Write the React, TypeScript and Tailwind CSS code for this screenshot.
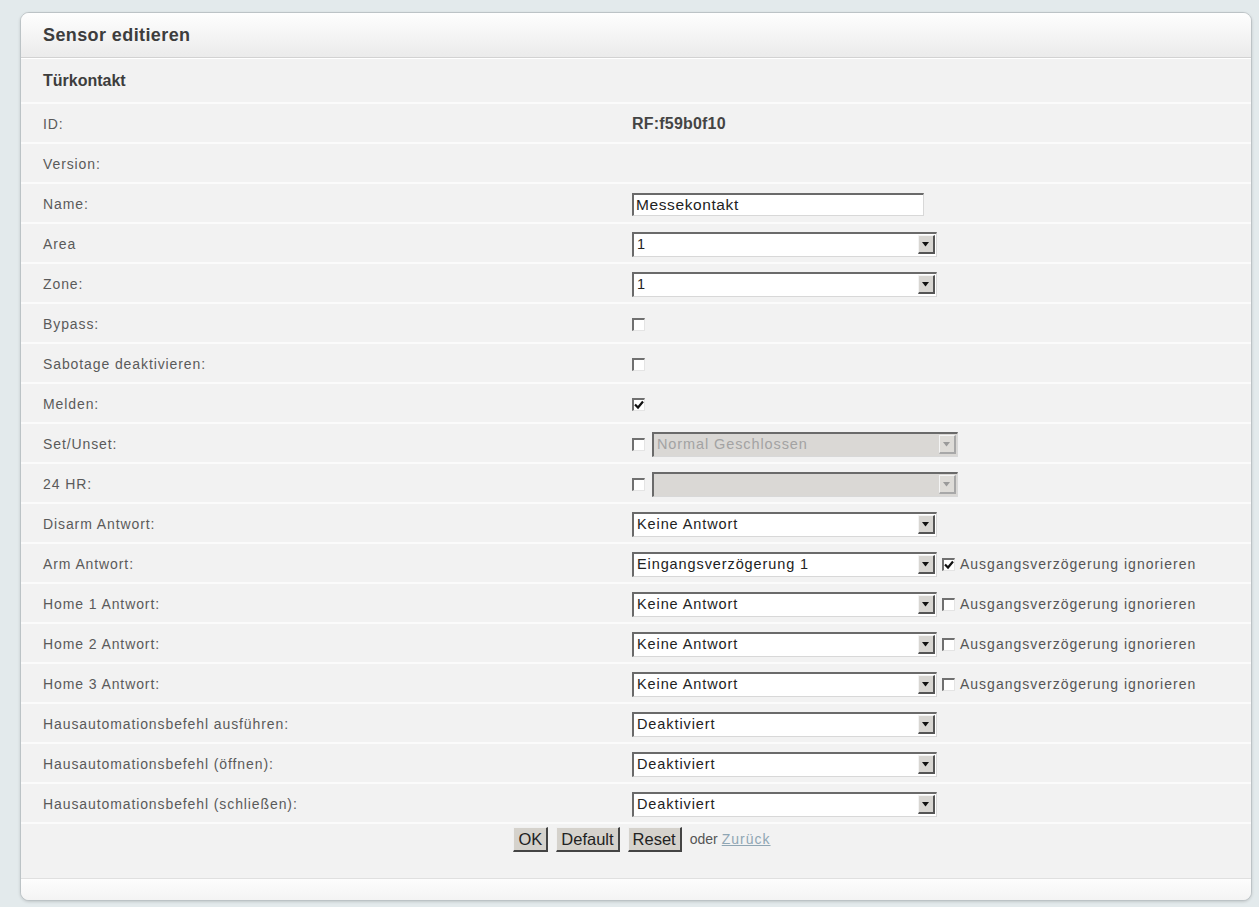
import React from 'react';

const font = { fontFamily: '"Liberation Sans", Arial, sans-serif' };

type Field =
    | { kind: 'text'; value?: string; bold?: boolean }
    | { kind: 'input'; value: string }
    | { kind: 'select'; value: string; ignore?: boolean | null }
    | { kind: 'check'; checked: boolean }
    | { kind: 'checkSelect'; value: string };

interface Row {
    label: string;
    field: Field;
}

const rows: Row[] = [
    { label: 'ID:', field: { kind: 'text', value: 'RF:f59b0f10', bold: true } },
    { label: 'Version:', field: { kind: 'text' } },
    { label: 'Name:', field: { kind: 'input', value: 'Messekontakt' } },
    { label: 'Area', field: { kind: 'select', value: '1' } },
    { label: 'Zone:', field: { kind: 'select', value: '1' } },
    { label: 'Bypass:', field: { kind: 'check', checked: false } },
    { label: 'Sabotage deaktivieren:', field: { kind: 'check', checked: false } },
    { label: 'Melden:', field: { kind: 'check', checked: true } },
    { label: 'Set/Unset:', field: { kind: 'checkSelect', value: 'Normal Geschlossen' } },
    { label: '24 HR:', field: { kind: 'checkSelect', value: '' } },
    { label: 'Disarm Antwort:', field: { kind: 'select', value: 'Keine Antwort' } },
    { label: 'Arm Antwort:', field: { kind: 'select', value: 'Eingangsverzögerung 1', ignore: true } },
    { label: 'Home 1 Antwort:', field: { kind: 'select', value: 'Keine Antwort', ignore: false } },
    { label: 'Home 2 Antwort:', field: { kind: 'select', value: 'Keine Antwort', ignore: false } },
    { label: 'Home 3 Antwort:', field: { kind: 'select', value: 'Keine Antwort', ignore: false } },
    { label: 'Hausautomationsbefehl ausführen:', field: { kind: 'select', value: 'Deaktiviert' } },
    { label: 'Hausautomationsbefehl (öffnen):', field: { kind: 'select', value: 'Deaktiviert' } },
    { label: 'Hausautomationsbefehl (schließen):', field: { kind: 'select', value: 'Deaktiviert' } },
];

// old windows style checkbox
const CheckBox: React.FC<{ checked?: boolean }> = ({ checked }) => (
    <span className="relative inline-block w-[13px] h-[13px] bg-white border-t-[2px] border-l-[2px] border-t-[#707070] border-l-[#707070] border-b border-r border-b-[#e4e4e4] border-r-[#e4e4e4] shrink-0">
        {checked && (
            <svg className="absolute left-[0px] top-[0px]" width="10" height="10" viewBox="0 0 10 10">
                <path d="M1 4.5 L4 7.5 L9 1.5" stroke="#111" strokeWidth="2.2" fill="none" />
            </svg>
        )}
    </span>
);

const Arrow: React.FC<{ disabled?: boolean }> = ({ disabled }) => (
    <span className={`flex items-center justify-center w-[17px] h-[19px] border-t border-l border-t-[#f4f4f4] border-l-[#f4f4f4] border-b-[2px] border-r-[2px] ${disabled ? 'bg-[#dedcd8] border-b-[#a8a8a8] border-r-[#a8a8a8]' : 'bg-[#d8d6d2] border-b-[#555] border-r-[#555]'}`}>
        <svg width="8" height="5" viewBox="0 0 8 5">
            <path d="M0 0 H7 L3.5 4.5 Z" fill={disabled ? '#9a9a9a' : '#111'} />
        </svg>
    </span>
);

const Select: React.FC<{ value: string; disabled?: boolean; width: string }> = ({ value, disabled, width }) => (
    <div className={`flex items-center justify-between h-[25px] ${width} pl-[3px] pr-[1px] border-t-[2px] border-l-[2px] border-t-[#6a6a6a] border-l-[#6a6a6a] border-b border-r border-b-[#d8d8d8] border-r-[#d8d8d8] ${disabled ? 'bg-[#dad8d5] text-[#a3a3a3]' : 'bg-white text-[#222]'}`}>
        <span className="text-[14.5px] tracking-[0.9px] leading-none">{value}</span>
        <Arrow disabled={disabled} />
    </div>
);

const FieldCell: React.FC<{ field: Field }> = ({ field }) => {
    switch (field.kind) {
        case 'text':
            return <span className={`text-[16px] ${field.bold ? 'font-bold text-[#444] tracking-[0.2px]' : ''}`}>{field.value}</span>;
        case 'input':
            return (
                <div className="flex items-center w-[292px] h-[23px] pl-[2px] bg-white border-t-[2px] border-l-[2px] border-t-[#6a6a6a] border-l-[#6a6a6a] border-b border-r border-b-[#d8d8d8] border-r-[#d8d8d8] text-[15.5px] tracking-[0.6px] text-[#222]">
                    {field.value}
                </div>
            );
        case 'select':
            return (
                <div className="flex items-center">
                    <Select value={field.value} width="w-[305px]" />
                    {field.ignore !== undefined && field.ignore !== null && (
                        <div className="flex items-center ml-[5px] gap-[5px]">
                            <CheckBox checked={field.ignore} />
                            <span className="text-[14px] tracking-[1px] text-[#555]">Ausgangsverzögerung ignorieren</span>
                        </div>
                    )}
                </div>
            );
        case 'check':
            return <CheckBox checked={field.checked} />;
        case 'checkSelect':
            return (
                <div className="flex items-center gap-[7px]">
                    <CheckBox />
                    <Select value={field.value} disabled width="w-[306px]" />
                </div>
            );
    }
};

const Btn: React.FC<{ children: React.ReactNode }> = ({ children }) => (
    <button className="h-[25px] px-[4px] bg-[#d5d2cc] text-[16.5px] text-[#222] leading-none border-t border-l border-t-[#f0f0f0] border-l-[#f0f0f0] border-b-[2px] border-r-[2px] border-b-[#444] border-r-[#444]">
        {children}
    </button>
);

export default function App() {
    return (
        <div className="w-[1259px] h-[907px] bg-[#e3eaec] pt-[12px] pl-[20px] pr-[7px]" style={font}>
            <div className="h-[889px] rounded-[9px] border border-[#bcc3c6] bg-[#f2f2f2] shadow-[0_1px_3px_rgba(0,0,0,0.15)] overflow-hidden flex flex-col">
                <div className="h-[45px] shrink-0 flex items-center pl-[22px] bg-gradient-to-b from-[#fefefe] to-[#ebebeb] border-b border-[#d2d2d2]">
                    <span className="text-[18px] font-bold text-[#3d3d3d] tracking-[0.4px]">Sensor editieren</span>
                </div>
                <div className="h-[44px] shrink-0 flex items-center pl-[22px] border-t border-white">
                    <span className="text-[16px] font-bold text-[#3d3d3d]">Türkontakt</span>
                </div>
                {rows.map((r, i) => (
                    <div key={i} className="h-[40px] shrink-0 grid grid-cols-[611px_1fr] items-center border-t-[2px] border-t-[#fbfbfb] pt-[2px]">
                        <span className="pl-[22px] text-[14px] tracking-[0.9px] text-[#5a5a5a]">{r.label}</span>
                        <div className="flex items-center">
                            <FieldCell field={r.field} />
                        </div>
                    </div>
                ))}
                <div className="h-[56px] shrink-0 flex items-start justify-center pt-[3px] pl-[12px] gap-[8px] border-t-[2px] border-t-[#fbfbfb]">
                    <Btn>OK</Btn>
                    <Btn>Default</Btn>
                    <Btn>Reset</Btn>
                    <span className="h-[25px] flex items-center gap-[4px] text-[14px] text-[#555]">
                        oder <a className="underline text-[#8fa6b4] tracking-[1px]">Zurück</a>
                    </span>
                </div>
                <div className="flex-1 bg-gradient-to-b from-[#fdfdfd] to-[#f4f4f4] border-t border-[#e0e0e0]" />
            </div>
        </div>
    );
}
